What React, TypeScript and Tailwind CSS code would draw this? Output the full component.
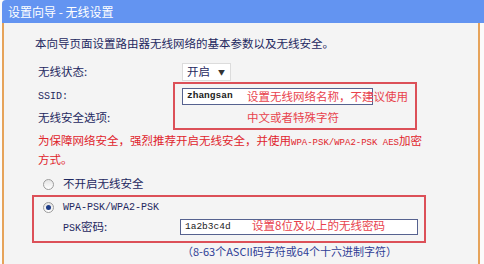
const cjk = "font-['Noto_Sans_CJK_SC',sans-serif]";
const mono = "font-['Liberation_Mono','Noto_Sans_CJK_SC',monospace]";

function Radio({ checked }: { checked?: boolean }) {
	return (
		<span className="w-[11px] h-[11px] rounded-full border border-[#9c9c9c] bg-gradient-to-b from-[#e4e4e4] to-[#ffffff] flex items-center justify-center shrink-0">
			{checked && <span className="w-[5px] h-[5px] rounded-full bg-[#1c3a86]" />}
		</span>
	);
}

export default function App() {
	return (
		<div className={`w-[484px] h-[264px] bg-[#fbfbfb] overflow-hidden ${cjk} text-[11.5px] text-[#1e2860]`}>
			<div className="ml-[2px] h-[23px] bg-[#6394f1] rounded-tl-[4px] flex items-center pl-[6px] text-white text-[12px]">
				设置向导 - 无线设置
			</div>

			<div className="relative ml-[2px] w-[478px] h-[241px] pt-[12px] bg-[#f4f4f4] border-x-2 border-[#e6a35a]">
				<div className="h-[16px] leading-[16px] ml-[31px]">
					本向导页面设置路由器无线网络的基本参数以及无线安全。
				</div>

				<div className="mt-[11px] h-[20px] flex items-center ml-[34px]">
					<span className="w-[144px]">无线状态:</span>
					<span className="h-[18px] w-[49px] bg-white border border-[#dcdcdc] flex items-center pl-[4px] gap-[8px]">
						开启
						<span className="text-[7px] text-[#333]">▼</span>
					</span>
				</div>

				<div className="mt-[4px] h-[20px] flex items-center ml-[34px]">
					<span className={`w-[144px] ${mono} text-[10px]`}>SSID:</span>
					<span className={`h-[17px] w-[191px] bg-white border border-[#56628f] flex items-center pl-[4px] ${mono} text-[9.5px] font-bold text-[#222]`}>
						zhangsan
					</span>
				</div>

				<div className="mt-[2px] h-[20px] flex items-center ml-[34px]">无线安全选项:</div>

				<div className="mt-[4px] ml-[34px] leading-[16px] text-[#e0242c]">
					为保障网络安全，强烈推荐开启无线安全，并使用
					<span className={`${mono} text-[9px]`}>WPA-PSK/WPA2-PSK AES</span>
					加密
					<br />
					方式。
				</div>

				<div className="mt-[8px] h-[18px] flex items-center ml-[39px] gap-[9px]">
					<Radio />
					<span>不开启无线安全</span>
				</div>

				<div className="mt-[2px] ml-[28px] w-[394px] border-2 border-[#dc5058] pb-[4px]">
					<div className="h-[20px] flex items-center ml-[9px] gap-[9px]">
						<Radio checked />
						<span className={`${mono} text-[10px]`}>WPA-PSK/WPA2-PSK</span>
					</div>
					<div className="h-[20px] flex items-center ml-[29px]">
						<span className="w-[117px]">
							<span className={`${mono} text-[10px]`}>PSK</span>密码:
						</span>
						<span className={`h-[16px] w-[238px] bg-white border border-[#56628f] flex items-center pl-[4px] ${mono} text-[9.5px] text-[#222]`}>
							1a2b3c4d
						</span>
					</div>
				</div>

				<div className="h-[16px] leading-[16px] ml-[178px] text-[11px] text-[#2f3d96]">
					（8-63个ASCII码字符或64个十六进制字符）
				</div>

				{/* annotation over the SSID field */}
				<div className="absolute left-[169px] top-[59px] w-[244px] h-[48px] border-2 border-[#dc5058] text-[#e8424c]">
					<div className="absolute left-[72px] top-[4px] leading-[16px] whitespace-nowrap">设置无线网络名称，不建议使用</div>
					<div className="absolute left-[72px] top-[25px] leading-[16px] whitespace-nowrap">中文或者特殊字符</div>
				</div>

				{/* annotation over the password field */}
				<div className="absolute left-[248px] top-[194px] leading-[16px] text-[#e8424c] whitespace-nowrap">
					设置8位及以上的无线密码
				</div>
			</div>
		</div>
	);
}
